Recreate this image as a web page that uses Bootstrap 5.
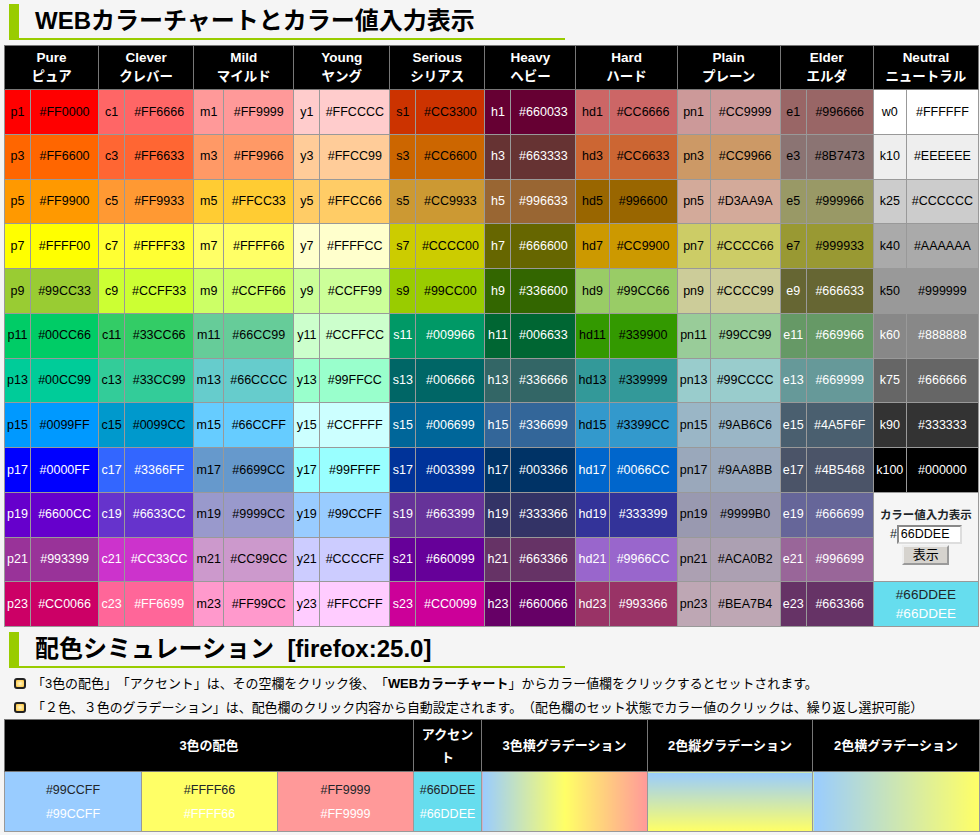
<!DOCTYPE html>
<html lang="ja">
<head>
<meta charset="utf-8">
<title>WEBカラーチャート</title>
<link href="https://cdn.jsdelivr.net/npm/bootstrap@5.3.0/dist/css/bootstrap.min.css" rel="stylesheet">
<style>
html,body{height:835px;overflow:hidden}
body{background:#f5f5f5;color:#000;font-family:"Liberation Sans","Noto Sans CJK JP",sans-serif;font-size:12.5px;line-height:1.2;text-spacing-trim:space-all}
.page-wrap{padding:4px 1px 0 4px}
.sec-title{margin:0 0 0 5px;width:556px;height:36px;border-left:10px solid #9c0;border-bottom:2px solid #9c0;padding-left:16px;font-family:"Liberation Sans","Noto Sans CJK JP",sans-serif;font-size:24px;font-weight:700;line-height:34px;color:#000;white-space:pre}
.sim-title{margin-top:5px}
.chart{table-layout:fixed;width:975px;border-collapse:collapse;--bs-table-border-color:#999;--bs-table-bg:transparent}
.chart>:not(caption)>*>*{padding:0;border:1px solid #999;box-shadow:none;font-size:12.5px;line-height:1;white-space:nowrap;overflow:hidden;vertical-align:middle}
.color-chart{margin-top:5px}
.color-chart thead th{height:44px;padding-bottom:1px;background:#000;color:#fff;font-weight:700;font-size:13.5px;line-height:19px;border-color:#777}
.color-chart tbody td{height:44.75px}
.form-cell{background:#f5f5f5;line-height:1.2!important}
.form-title{font-size:11.5px;font-weight:700;margin-bottom:2px}
.hex-input{width:65px;height:19px;padding:0 0 0 2px;font-size:12.5px;font-family:inherit;border:2px inset #ddd;background:#fff;border-radius:0;vertical-align:middle}
.show-btn{display:block;margin:1px auto 0;width:47px;height:20px;padding:0;font-size:13px;font-family:inherit;background:#d6d3ce;border:2px outset #eee;border-radius:0;color:#000;line-height:1}
.sample-cell{font-size:13.5px!important;line-height:19px!important}
.notes{margin:4px 0 0 10px;font-size:12.95px;line-height:23.5px}
.notes li{white-space:nowrap}
.note-mark{flex:none;width:12px;height:11px;margin-right:6px;border:2px solid #222;border-radius:3px;background:radial-gradient(#fff8cc,#ffc02e)}
.sim-chart thead th{height:52px;background:#000;color:#fff;font-weight:700;font-size:13px;line-height:23px;border-color:#777;white-space:normal;padding:0 2px}
.sim-chart tbody td{height:60px;line-height:24px}
.grad-3h{background:linear-gradient(to right,#9cf,#ff6,#f99)}
.grad-2v{background:linear-gradient(to bottom,#9cf,#ff6)}
.grad-2h{background:linear-gradient(to right,#9cf,#ff6)}
</style>
</head>
<body>
<div class="page-wrap">
  <h2 class="sec-title">WEBカラーチャートとカラー値入力表示</h2>
  <table class="table table-bordered align-middle text-center mb-0 chart color-chart">
    <colgroup id="cols"></colgroup>
    <thead><tr id="head"></tr></thead>
    <tbody id="rows"></tbody>
  </table>

  <h2 class="sec-title sim-title">配色シミュレーション  [firefox:25.0]</h2>
  <ul class="list-unstyled notes">
    <li class="d-flex align-items-center"><span class="note-mark"></span><span>「3色の配色」「アクセント」は、その空欄をクリック後、「<b>WEBカラーチャート</b>」からカラー値欄をクリックするとセットされます。</span></li>
    <li class="d-flex align-items-center"><span class="note-mark"></span><span>「２色、３色のグラデーション」は、配色欄のクリック内容から自動設定されます。（配色欄のセット状態でカラー値のクリックは、繰り返し選択可能）</span></li>
  </ul>
  <table class="table table-bordered align-middle text-center mb-0 chart sim-chart">
    <colgroup><col width="137"><col width="136"><col width="136"><col width="68"><col width="166"><col width="165"><col width="167"></colgroup>
    <thead><tr><th colspan="3">3色の配色</th><th>アクセント</th><th>3色横グラデーション</th><th>2色縦グラデーション</th><th>2色横グラデーション</th></tr></thead>
    <tbody><tr>
      <td style="background-color:#99CCFF"><div>#99CCFF</div><div class="text-white">#99CCFF</div></td>
      <td style="background-color:#FFFF66"><div>#FFFF66</div><div class="text-white">#FFFF66</div></td>
      <td style="background-color:#FF9999"><div>#FF9999</div><div class="text-white">#FF9999</div></td>
      <td style="background-color:#66DDEE"><div>#66DDEE</div><div class="text-white">#66DDEE</div></td>
      <td class="grad-3h"></td><td class="grad-2v"></td><td class="grad-2h"></td>
    </tr></tbody>
  </table>
</div>
<script src="https://cdn.jsdelivr.net/npm/bootstrap@5.3.0/dist/js/bootstrap.bundle.min.js"></script>
<script>
const groups=[
["Pure","ピュア","p",26,68,8,"FF0000 FF6600 FF9900 FFFF00 99CC33 00CC66 00CC99 0099FF 0000FF 6600CC 993399 CC0066"],
["Clever","クレバー","c",26,69,8,"FF6666 FF6633 FF9933 FFFF33 CCFF33 33CC66 33CC99 0099CC 3366FF 6633CC CC33CC FF6699"],
["Mild","マイルド","m",30,70,99,"FF9999 FF9966 FFCC33 FFFF66 CCFF66 66CC99 66CCCC 66CCFF 6699CC 9999CC CC99CC FF99CC"],
["Young","ヤング","y",26,70,99,"FFCCCC FFCC99 FFCC66 FFFFCC CCFF99 CCFFCC 99FFCC CCFFFF 99FFFF 99CCFF CCCCFF FFCCFF"],
["Serious","シリアス","s",26,69,5,"CC3300 CC6600 CC9933 CCCC00 99CC00 009966 006666 006699 003399 663399 660099 CC0099"],
["Heavy","ヘビー","h",26,65,0,"660033 663333 996633 666600 336600 006633 336666 336699 003366 333366 663366 660066"],
["Hard","ハード","hd",33,68,8,"CC6666 CC6633 996600 CC9900 99CC66 339900 339999 3399CC 0066CC 333399 9966CC 993366"],
["Plain","プレーン","pn",33,70,99,"CC9999 CC9966 D3AA9A CCCC66 CCCC99 99CC99 99CCCC 9AB6C6 9AA8BB 9999B0 ACA0B2 BEA7B4"],
["Elder","エルダ","e",26,67,4,"996666 8B7473 999966 999933 666633 669966 669999 4A5F6F 4B5468 666699 996699 663366"],
["Neutral","ニュートラル","k",33,72,5,"FFFFFF EEEEEE CCCCCC AAAAAA 999999 888888 666666 333333 000000"]];
const nLabels=["w0","k10","k25","k40","k50","k60","k75","k90","k100"];
let cols="",head="";
groups.forEach(g=>{cols+=`<col width="${g[3]}"><col width="${g[4]}">`;head+=`<th colspan="2">${g[0]}<br>${g[1]}</th>`;});
document.getElementById("cols").innerHTML=cols;
document.getElementById("head").innerHTML=head;
let body="";
for(let r=0;r<12;r++){
  body+="<tr>";
  groups.forEach((g,gi)=>{
    const list=g[6].split(" ");
    if(gi===9&&r>=9){
      if(r===9) body+=`<td colspan="2" rowspan="2" class="form-cell"><div class="form-title">カラー値入力表示</div><div>#<input class="hex-input" type="text" value="66DDEE"></div><button type="button" class="show-btn">表示</button></td>`;
      if(r===11) body+=`<td colspan="2" class="sample-cell" style="background-color:#66DDEE"><div>#66DDEE</div><div class="text-white">#66DDEE</div></td>`;
      return;
    }
    const hex=list[r],label=gi===9?nLabels[r]:g[2]+(2*r+1),col=r>=g[5]?"#fff":"#000";
    const s=`background-color:#${hex};color:${col}`;
    body+=`<td style="${s}">${label}</td><td style="${s}">#${hex}</td>`;
  });
  body+="</tr>";
}
document.getElementById("rows").innerHTML=body;
</script>
</body>
</html>
